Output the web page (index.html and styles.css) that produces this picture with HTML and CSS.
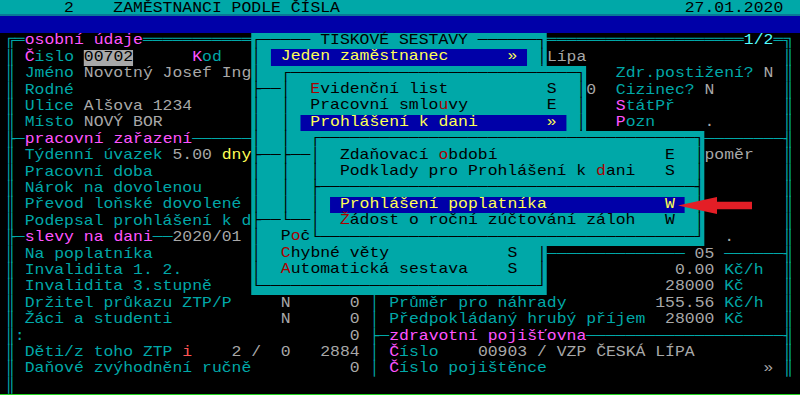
FILE: index.html
```html
<!DOCTYPE html>
<html lang="cs">
<head>
    <meta charset="UTF-8">
    <meta name="viewport" content="width=device-width, initial-scale=1.0">
    <title>Zaměstnanci podle čísla</title>
    <link rel="stylesheet" href="styles.css">
</head>
<body>
    <div class="screen">
        <div class="grid">
<div class="ln title">      2    ZAMĚSTNANCI PODLE ČÍSLA                                   27.01.2020</div>
<div class="ln"></div>
<div class="ln">╔═<span class="m">osobní údaje</span>═════════════════════════════════════════════════════════════<span class="w">1/2</span>═╗</div>
<div class="ln">║ <span class="m">Č</span>islo <span class="fld">00702</span>      <span class="m">K</span>od                                 <span class="g">Lípa</span>                    ║</div>
<div class="ln">║ Jméno <span class="g">Novotný Josef Ing</span>                                     Zdr.postižení? <span class="g">N</span> ║</div>
<div class="ln">║ Rodné                                                    <span class="g">0</span>  Cizinec? <span class="g">N</span>       ║</div>
<div class="ln">║ Ulice <span class="g">Alšova 1234</span>                                           <span class="m">S</span>tátPř           ║</div>
<div class="ln">║ Místo <span class="g">NOVÝ BOR</span>                                              <span class="m">P</span>ozn     <span class="g">.</span>       ║</div>
<div class="ln">╟─<span class="m">pracovní zařazení</span>────────────────────────────────────────────────────────────╢</div>
<div class="ln">║ Týdenní úvazek <span class="g">5.00</span> <span class="y">dny</span>                                              <span class="g">poměr</span>   ║</div>
<div class="ln">║ Pracovní doba                                                                ║</div>
<div class="ln">║ Nárok na dovolenou                                                           ║</div>
<div class="ln">║ Převod loňské dovolené                                                       ║</div>
<div class="ln">║ Podepsal prohlášení k d                                                      ║</div>
<div class="ln">╟─<span class="m">slevy na dani</span>──<span class="g">2020/01</span>                                                 <span class="g">.</span>     ║</div>
<div class="ln">║ Na poplatníka                                        ──────────────<span class="g"> 05 </span>──────╢</div>
<div class="ln">║ Invalidita 1. 2.                                                  <span class="g">0.00</span> Kč/h  ║</div>
<div class="ln">║ Invalidita 3.stupně                                              <span class="g">28000</span> Kč    ║</div>
<div class="ln">║ Držitel průkazu ZTP/P     <span class="g">N</span>      <span class="g">0</span> │ Průměr pro náhrady         <span class="g">155.56</span> Kč/h  ║</div>
<div class="ln">║ Žáci a studenti           <span class="g">N</span>      <span class="g">0</span> │ Předpokládaný hrubý příjem  <span class="g">28000</span> Kč    ║</div>
<div class="ln">║:                                 <span class="g">0</span> ├─<span class="m">zdravotní pojišťovna</span>────────────────────╢</div>
<div class="ln">║ Děti/z toho ZTP <span class="br">i</span><span class="g">    2 /  0   2884</span> │ <span class="m">Č</span>íslo    <span class="g">00903 / VZP ČESKÁ LÍPA</span>         ║</div>
<div class="ln">║ Daňové zvýhodnění ručně          <span class="g">0</span> │ <span class="m">Č</span>íslo pojištěnce                      <span class="g">»</span> ║</div>
<div class="ln">║</div>

            <div class="pop p1">
<div class="ln">┌───── TISKOVÉ SESTAVY ──────┐</div>
<div class="ln">│ <span class="sel"> Jeden zaměstnanec      » </span> │</div>
<div class="ln">│                            │</div>
<div class="ln">├────────────────────────────┤</div>
<div class="ln">│                            │</div>
<div class="ln">│                            │</div>
<div class="ln">│                            │</div>
<div class="ln">├────────────────────────────┤</div>
<div class="ln">│                            │</div>
<div class="ln">│                            │</div>
<div class="ln">│                            │</div>
<div class="ln">├────────────────────────────┤</div>
<div class="ln">│  P<span class="r">o</span>č                       │</div>
<div class="ln">│  <span class="r">C</span>hybné věty            S  │</div>
<div class="ln">│  <span class="r">A</span>utomatická sestava    S  │</div>
<div class="ln">└────────────────────────────┘</div>
            </div>

            <div class="pop p2">
<div class="ln">┌─────────────────────────────┐</div>
<div class="ln">│  <span class="r">E</span>videnční list          S  │</div>
<div class="ln">│  Pracovní smlo<span class="r">u</span>vy        E  │</div>
<div class="ln">│ <span class="sel"> Prohlášení k dani       » </span> │</div>
<div class="ln">│                             │</div>
<div class="ln">├─────────────────────────────┤</div>
<div class="ln">│                             │</div>
<div class="ln">│                             │</div>
<div class="ln">│                             │</div>
<div class="ln">└─────────────────────────────┘</div>
            </div>

            <div class="pop p3">
<div class="ln">┌──────────────────────────────────────┐</div>
<div class="ln">│  Zdaňovací <span class="r">o</span>bdobí                 E  │</div>
<div class="ln">│  Podklady pro Prohlášení k <span class="r">d</span>ani   S  │</div>
<div class="ln">├──────────────────────────────────────┤</div>
<div class="ln">│ <span class="sel"> Prohlášení poplatníka            W </span> │</div>
<div class="ln">│  <span class="r">Ž</span>ádost o roční zúčtování záloh   W  │</div>
<div class="ln">└──────────────────────────────────────┘</div>
            </div>
        </div>

        <svg class="arrow" width="800" height="395" viewBox="0 0 800 395">
            <polygon points="678,205.5 717,197 717,201.7 752,201.7 752,209.3 717,209.3 717,214" fill="#e41e26"/>
        </svg>
    </div>
</body>
</html>
```

FILE: styles.css
```css
body {
    margin: 0;
    background: #000;
}

.screen {
    position: relative;
    width: 800px;
    height: 394px;
    overflow: hidden;
    border-bottom: 1px solid #22d322;
    background: linear-gradient(to bottom,
        #00a8a8 0, #00a8a8 14px,
        #0a7896 14px, #0a7896 16.4px,
        #0000a8 16.4px, #0000a8 32.8px,
        #000 32.8px);
}

/* 80 x 24 text mode grid: 9px glyph cells stretched to 9.85px */
.grid {
    position: relative;
    width: 720px;
    margin-left: 5.3px;
    transform: scaleX(1.0944);
    transform-origin: 0 0;
    font-family: "Liberation Mono", "DejaVu Sans Mono", monospace;
    font-size: 15px;
    line-height: 16.4px;
    color: #00a8a8;
}

.ln {
    box-sizing: border-box;
    height: 16.4px;
    padding-top: 0.7px;
    white-space: pre;
}

.title {
    color: #000;
}

.m {
    color: #ff54ff;
}

.g {
    color: #a8a8a8;
}

.y {
    color: #ffff54;
}

.w {
    color: #54ffff;
}

.br {
    color: #ff5454;
}

.fld {
    display: inline-block;
    background: #a8a8a8;
    color: #000;
}

.pop {
    position: absolute;
    background: #00a8a8;
    color: #000;
}

.pop .ln {
    padding-top: 0;
}

.pop .r {
    color: #a80000;
}

.sel {
    display: inline-block;
    background: #0000a8;
    color: #ffff54;
}

.p1 {
    left: 225px;
    top: 32.8px;
    width: 270px;
}

.p2 {
    left: 252px;
    top: 65.6px;
    width: 279px;
}

.p3 {
    left: 279px;
    top: 131.2px;
    width: 360px;
}

.arrow {
    position: absolute;
    left: 0;
    top: 0;
}
```
